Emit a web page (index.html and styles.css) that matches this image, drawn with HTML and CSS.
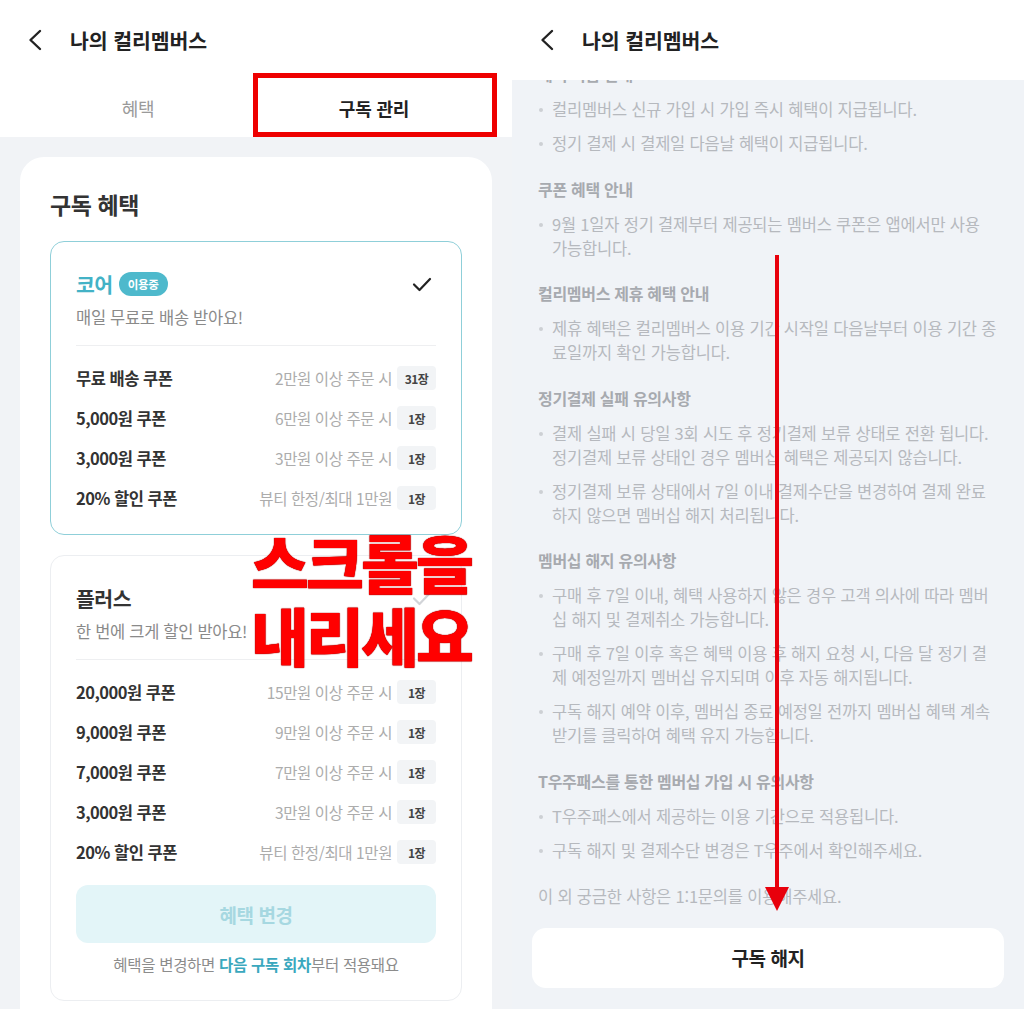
FILE: index.html
```html
<!DOCTYPE html>
<html lang="ko">
<head>
<meta charset="utf-8">
<title>나의 컬리멤버스</title>
<link rel="stylesheet" href="styles.css">
</head>
<body>
<div class="screen">
  <section class="panel panel-left">
    <header class="appbar">
      <svg class="back" viewBox="0 0 16 22" width="16" height="22"><polyline points="13,2 3.5,11 13,20" fill="none" stroke="#222" stroke-width="2.4" stroke-linecap="round" stroke-linejoin="round"/></svg>
      <h1 class="appbar-title">나의 컬리멤버스</h1>
    </header>
    <nav class="tabs">
      <div class="tab">혜택</div>
      <div class="tab tab-active">구독 관리</div>
    </nav>
    <main class="left-body">
      <div class="sheet">
        <h2 class="sheet-title">구독 혜택</h2>

        <div class="plan plan-core">
          <div class="plan-head">
            <span class="plan-name plan-name-active">코어</span>
            <span class="badge">이용중</span>
            <svg class="check" viewBox="0 0 22 22" width="22" height="22"><polyline points="3,11.5 8.5,17 19,6" fill="none" stroke="#222" stroke-width="2.2" stroke-linecap="round" stroke-linejoin="round"/></svg>
          </div>
          <p class="plan-desc">매일 무료로 배송 받아요!</p>
          <ul class="coupons">
            <li><span class="c-name">무료 배송 쿠폰</span><span class="c-cond">2만원 이상 주문 시</span><span class="chip">31장</span></li>
            <li><span class="c-name">5,000원 쿠폰</span><span class="c-cond">6만원 이상 주문 시</span><span class="chip">1장</span></li>
            <li><span class="c-name">3,000원 쿠폰</span><span class="c-cond">3만원 이상 주문 시</span><span class="chip">1장</span></li>
            <li><span class="c-name">20% 할인 쿠폰</span><span class="c-cond">뷰티 한정/최대 1만원</span><span class="chip">1장</span></li>
          </ul>
        </div>

        <div class="plan plan-plus">
          <div class="plan-head">
            <span class="plan-name">플러스</span>
            <svg class="check" viewBox="0 0 22 22" width="22" height="22"><polyline points="3,11.5 8.5,17 19,6" fill="none" stroke="#d2d4d8" stroke-width="2.2" stroke-linecap="round" stroke-linejoin="round"/></svg>
          </div>
          <p class="plan-desc">한 번에 크게 할인 받아요!</p>
          <ul class="coupons">
            <li><span class="c-name">20,000원 쿠폰</span><span class="c-cond">15만원 이상 주문 시</span><span class="chip">1장</span></li>
            <li><span class="c-name">9,000원 쿠폰</span><span class="c-cond">9만원 이상 주문 시</span><span class="chip">1장</span></li>
            <li><span class="c-name">7,000원 쿠폰</span><span class="c-cond">7만원 이상 주문 시</span><span class="chip">1장</span></li>
            <li><span class="c-name">3,000원 쿠폰</span><span class="c-cond">3만원 이상 주문 시</span><span class="chip">1장</span></li>
            <li><span class="c-name">20% 할인 쿠폰</span><span class="c-cond">뷰티 한정/최대 1만원</span><span class="chip">1장</span></li>
          </ul>
          <button class="btn-change" type="button">혜택 변경</button>
          <p class="change-note">혜택을 변경하면 <strong>다음 구독 회차</strong>부터 적용돼요</p>
        </div>
      </div>
    </main>
    <div class="annot-box"></div>
    <div class="annot-text">스크롤을<br>내리세요</div>
  </section>

  <section class="panel panel-right">
    <header class="appbar">
      <svg class="back" viewBox="0 0 16 22" width="16" height="22"><polyline points="13,2 3.5,11 13,20" fill="none" stroke="#222" stroke-width="2.4" stroke-linecap="round" stroke-linejoin="round"/></svg>
      <h1 class="appbar-title">나의 컬리멤버스</h1>
    </header>
    <main class="notice">
      <div class="notice-scroll">
        <h3 class="n-head">혜택 지급 안내</h3>
        <ul class="n-list">
          <li>컬리멤버스 신규 가입 시 가입 즉시 혜택이 지급됩니다.</li>
          <li>정기 결제 시 결제일 다음날 혜택이 지급됩니다.</li>
        </ul>
        <h3 class="n-head">쿠폰 혜택 안내</h3>
        <ul class="n-list">
          <li>9월 1일자 정기 결제부터 제공되는 멤버스 쿠폰은 앱에서만 사용<br>가능합니다.</li>
        </ul>
        <h3 class="n-head">컬리멤버스 제휴 혜택 안내</h3>
        <ul class="n-list">
          <li>제휴 혜택은 컬리멤버스 이용 기간 시작일 다음날부터 이용 기간 종<br>료일까지 확인 가능합니다.</li>
        </ul>
        <h3 class="n-head">정기결제 실패 유의사항</h3>
        <ul class="n-list">
          <li>결제 실패 시 당일 3회 시도 후 정기결제 보류 상태로 전환 됩니다.<br>정기결제 보류 상태인 경우 멤버십 혜택은 제공되지 않습니다.</li>
          <li>정기결제 보류 상태에서 7일 이내 결제수단을 변경하여 결제 완료<br>하지 않으면 멤버십 해지 처리됩니다.</li>
        </ul>
        <h3 class="n-head">멤버십 해지 유의사항</h3>
        <ul class="n-list">
          <li>구매 후 7일 이내, 혜택 사용하지 않은 경우 고객 의사에 따라 멤버<br>십 해지 및 결제취소 가능합니다.</li>
          <li>구매 후 7일 이후 혹은 혜택 이용 후 해지 요청 시, 다음 달 정기 결<br>제 예정일까지 멤버십 유지되며 이후 자동 해지됩니다.</li>
          <li>구독 해지 예약 이후, 멤버십 종료 예정일 전까지 멤버십 혜택 계속<br>받기를 클릭하여 혜택 유지 가능합니다.</li>
        </ul>
        <h3 class="n-head">T우주패스를 통한 멤버십 가입 시 유의사항</h3>
        <ul class="n-list">
          <li>T우주패스에서 제공하는 이용 기간으로 적용됩니다.</li>
          <li>구독 해지 및 결제수단 변경은 T우주에서 확인해주세요.</li>
        </ul>
        <p class="n-etc">이 외 궁금한 사항은 1:1문의를 이용해주세요.</p>
        <button class="btn-cancel" type="button">구독 해지</button>
      </div>
    </main>
    <svg class="annot-arrow" viewBox="0 0 30 670" width="30" height="670">
      <line x1="15" y1="5" x2="15" y2="640" stroke="#e8000c" stroke-width="4"/>
      <polygon points="3,637 27,637 15,661" fill="#e8000c"/>
    </svg>
  </section>
</div>
</body>
</html>
```

FILE: styles.css
```css
* { box-sizing: border-box; }

html, body {
  margin: 0;
  padding: 0;
  background: #ffffff;
}

body {
  font-family: "Noto Sans CJK KR", "Noto Sans", sans-serif;
  color: #222;
}

.screen {
  display: flex;
  width: 1024px;
  height: 1009px;
  overflow: hidden;
}

.panel {
  position: relative;
  width: 512px;
  height: 1009px;
  display: flex;
  flex-direction: column;
  overflow: hidden;
}

/* ---------- app bar ---------- */
.appbar {
  height: 78px;
  flex: none;
  display: flex;
  align-items: center;
  padding-left: 27px;
  padding-top: 2px;
  background: #fff;
  position: relative;
  z-index: 2;
}

.panel-right .appbar { height: 80px; padding-top: 0; }

.back { display: block; margin-right: 27px; }

.appbar-title {
  margin: 0;
  font-size: 20.5px;
  font-weight: 600;
  letter-spacing: -0.1px;
  color: #222;
}

/* ---------- tabs ---------- */
.tabs {
  height: 59px;
  flex: none;
  display: flex;
  padding: 0 20px;
  background: #fff;
}

.tab {
  flex: 1;
  display: flex;
  align-items: center;
  justify-content: center;
  font-size: 18px;
  color: #9a9a9a;
  letter-spacing: -0.2px;
}

.tab-active {
  color: #222;
  font-weight: 600;
}

/* ---------- left body ---------- */
.left-body {
  flex: 1;
  background: #f1f3f6;
  padding: 20px 20px 0;
}

.sheet {
  background: #fff;
  border-radius: 24px 24px 0 0;
  padding: 30px 30px 40px;
  min-height: 900px;
}

.sheet-title {
  margin: 0 0 20px;
  font-size: 23px;
  line-height: 34px;
  font-weight: 600;
  letter-spacing: -0.4px;
  color: #333;
}

.plan {
  border: 1px solid #eceef1;
  border-radius: 14px;
  padding: 28px 25px 16px;
}

.plan + .plan { margin-top: 20px; }

.plan-core { border-color: #8fcfd9; }

.plan-plus { padding-bottom: 26px; }

.plan-head {
  height: 28px;
  display: flex;
  align-items: center;
}

.plan-name {
  font-size: 20.5px;
  font-weight: 600;
  letter-spacing: -0.5px;
  color: #333;
}

.plan-name-active { color: #43b2c6; }

.badge {
  margin-left: 6px;
  height: 24px;
  padding: 0 9px;
  border-radius: 12px;
  background: #4eb9cc;
  color: #fff;
  font-size: 11.5px;
  font-weight: 600;
  line-height: 24px;
  letter-spacing: -0.3px;
}

.check { margin-left: auto; margin-right: 3px; display: block; }

.plan-desc {
  margin: 8px 0 0;
  font-size: 16.5px;
  line-height: 22px;
  color: #8a8a8a;
  letter-spacing: -0.3px;
}

.coupons {
  list-style: none;
  margin: 17px 0 0;
  padding: 12px 0 0;
  border-top: 1px solid #eeeff1;
}

.coupons li {
  height: 40px;
  display: flex;
  align-items: center;
}

.c-name {
  font-size: 16.5px;
  font-weight: 600;
  color: #333;
  letter-spacing: -0.5px;
}

.c-cond {
  margin-left: auto;
  font-size: 15.5px;
  color: #acacac;
  letter-spacing: -0.4px;
}

.chip {
  margin-left: 5px;
  width: 39px;
  height: 24px;
  border-radius: 4px;
  background: #f2f4f6;
  display: flex;
  align-items: center;
  justify-content: center;
  font-size: 12px;
  font-weight: 700;
  color: #444;
  letter-spacing: -0.5px;
}

.btn-change {
  display: block;
  width: 100%;
  height: 58px;
  margin-top: 13px;
  border: 0;
  border-radius: 12px;
  background: #e3f5f8;
  color: #a6d8e1;
  font-family: inherit;
  font-size: 19px;
  font-weight: 700;
  letter-spacing: -0.4px;
}

.change-note {
  margin: 11px 0 0;
  text-align: center;
  font-size: 15.5px;
  line-height: 20px;
  color: #8c8c8c;
  letter-spacing: -0.3px;
}

.change-note strong {
  color: #3aa8be;
  font-weight: 700;
}

/* ---------- annotations ---------- */
.annot-box {
  position: absolute;
  left: 253px;
  top: 73px;
  width: 244px;
  height: 64px;
  border: 5px solid #ee0000;
  z-index: 3;
}

.annot-text {
  position: absolute;
  left: 251px;
  top: 524px;
  font-size: 63px;
  line-height: 73px;
  font-weight: 900;
  letter-spacing: -3px;
  color: #ff0000;
  text-shadow: 0 0 1px #a00000, 0 0 1px #a00000;
  z-index: 3;
  white-space: nowrap;
}

.annot-arrow {
  position: absolute;
  left: 250px;
  top: 250px;
  z-index: 3;
}

/* ---------- right notice ---------- */
.notice {
  flex: 1;
  background: #f0f3f7;
  overflow: hidden;
  padding: 0 20px;
}

.notice-scroll {
  margin-top: -18px;
}

.n-head {
  margin: 21.5px 6px 11px;
  font-size: 16px;
  line-height: 24px;
  font-weight: 600;
  color: #a7aaaf;
  letter-spacing: -0.3px;
}

.n-head:first-child { margin-top: 0; }

.n-list {
  list-style: none;
  margin: 0;
  padding: 0 0 0 20px;
}

.n-list li {
  position: relative;
  font-size: 16.5px;
  line-height: 24px;
  color: #b6b9be;
  letter-spacing: -0.2px;
  white-space: nowrap;
}

.n-list li + li { margin-top: 10px; }

.n-list li::before {
  content: "";
  position: absolute;
  left: -13px;
  top: 11px;
  width: 4px;
  height: 4px;
  border-radius: 50%;
  background: #cdd0d4;
}

.n-etc {
  margin: 22px 6px 0;
  font-size: 16.5px;
  line-height: 24px;
  color: #b6b9be;
  letter-spacing: -0.2px;
}

.btn-cancel {
  display: block;
  width: 100%;
  height: 60px;
  margin-top: 20px;
  border: 0;
  border-radius: 14px;
  background: #fff;
  color: #222;
  font-family: inherit;
  font-size: 19px;
  font-weight: 700;
  letter-spacing: -0.4px;
}
```
